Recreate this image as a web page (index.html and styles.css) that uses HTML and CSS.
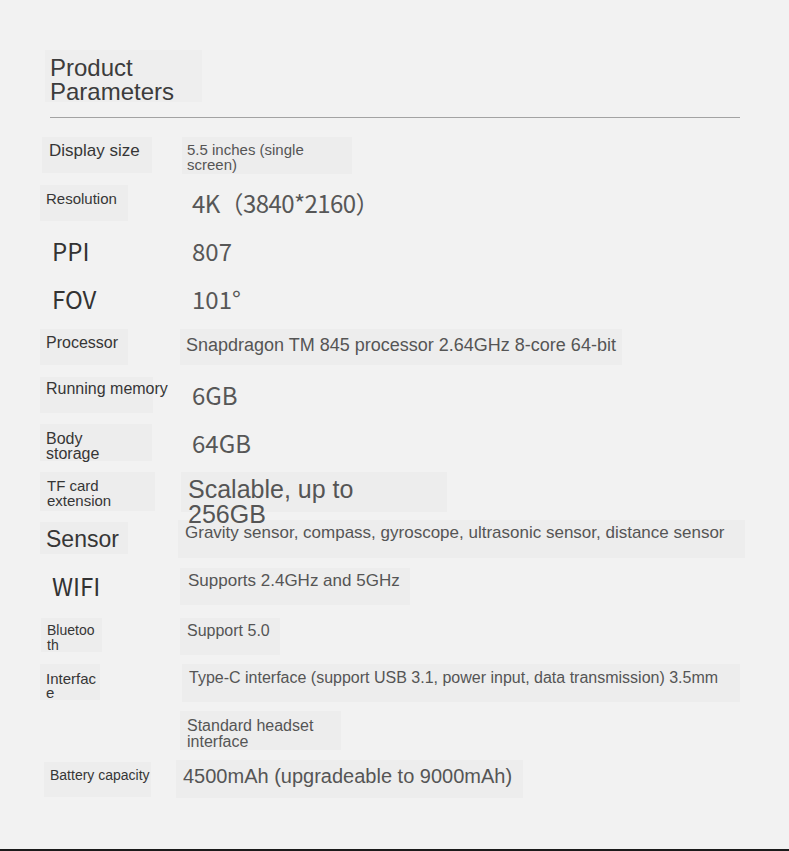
FILE: index.html
```html
<!DOCTYPE html>
<html lang="en">
<head>
<meta charset="utf-8">
<title>Product Parameters</title>
<link rel="stylesheet" href="styles.css">
</head>
<body>
<main class="sheet">
  <header class="title-box">
    <h1 class="title">Product<br>Parameters</h1>
  </header>
  <hr class="rule">
  <dl class="params">
    <div class="row">
      <dt class="k box k-display">Display size</dt>
      <dd class="v box v-display">5.5 inches (single screen)</dd>
    </div>
    <div class="row">
      <dt class="k box k-res">Resolution</dt>
      <dd class="v cjk v-big v-res">4K（3840*2160）</dd>
    </div>
    <div class="row">
      <dt class="k cjk k-big">PPI</dt>
      <dd class="v cjk v-big">807</dd>
    </div>
    <div class="row">
      <dt class="k cjk k-big">FOV</dt>
      <dd class="v cjk v-big">101°</dd>
    </div>
    <div class="row">
      <dt class="k box k-proc">Processor</dt>
      <dd class="v box v-proc">Snapdragon TM 845 processor 2.64GHz 8-core 64-bit</dd>
    </div>
    <div class="row">
      <dt class="k box k-mem">Running memory</dt>
      <dd class="v cjk v-big">6GB</dd>
    </div>
    <div class="row">
      <dt class="k box k-body">Body storage</dt>
      <dd class="v cjk v-big v-big-low">64GB</dd>
    </div>
    <div class="row">
      <dt class="k box k-tf">TF card extension</dt>
      <dd class="v box v-tf">Scalable, up to 256GB</dd>
    </div>
    <div class="row">
      <dt class="k box k-sensor">Sensor</dt>
      <dd class="v box v-sensor">Gravity sensor, compass, gyroscope, ultrasonic sensor, distance sensor</dd>
    </div>
    <div class="row">
      <dt class="k cjk k-big k-wifi">WIFI</dt>
      <dd class="v box v-wifi">Supports 2.4GHz and 5GHz</dd>
    </div>
    <div class="row">
      <dt class="k box k-bt">Bluetooth</dt>
      <dd class="v box v-bt">Support 5.0</dd>
    </div>
    <div class="row">
      <dt class="k box k-if">Interface</dt>
      <dd class="v box v-if">Type-C interface (support USB 3.1, power input, data transmission) 3.5mm</dd>
    </div>
    <div class="row">
      <dt class="k k-empty"></dt>
      <dd class="v box v-headset">Standard headset interface</dd>
    </div>
    <div class="row">
      <dt class="k box k-bat">Battery capacity</dt>
      <dd class="v box v-bat">4500mAh (upgradeable to 9000mAh)</dd>
    </div>
  </dl>
</main>
</body>
</html>
```

FILE: styles.css
```css
* {
  box-sizing: border-box;
}

html, body {
  margin: 0;
  padding: 0;
  background: #f2f2f2;
}

body {
  font-family: "Liberation Sans", Arial, sans-serif;
  color: #3a3a3a;
}

.sheet {
  height: 851px;
  border-bottom: 2px solid #1b1b1b;
  overflow: hidden;
  padding-top: 50px;
}

.title-box {
  margin-left: 45px;
  width: 157px;
  height: 52px;
  background: #eeeeee;
  padding: 6px 0 0 5px;
}

.title {
  margin: 0;
  font-weight: 400;
  font-size: 24px;
  line-height: 24px;
  color: #3c3c3c;
}

.rule {
  margin: 15px 0 0 50px;
  width: 690px;
  height: 0;
  border: 0;
  border-top: 1px solid #a3a3a3;
}

.params {
  margin: 19px 0 0;
  padding-left: 38px;
}

.row {
  display: grid;
  grid-template-columns: 138px 1fr;
  align-items: start;
  height: 48px;
}

.k,
.v {
  margin: 0;
  white-space: nowrap;
  justify-self: start;
}

.k {
  color: #363636;
}

.v {
  color: #555555;
}

.box {
  background: #ededed;
}

.cjk {
  font-family: "Noto Sans CJK SC", "Noto Sans", sans-serif;
  font-size: 24px;
  line-height: 24px;
}

/* big CJK-styled entries */
.k-big {
  margin-left: 14px;
  padding-top: 5.5px;
  color: #333333;
}

.k-wifi {
  padding-top: 4.5px;
}

.v-big {
  margin-left: 16px;
  padding-top: 5.5px;
  color: #575757;
}

.v-big-low {
  padding-top: 6px;
}

.v-res {
  letter-spacing: -0.6px;
}

/* Display size */
.k-display {
  margin-left: 4px;
  width: 110px;
  height: 36px;
  padding: 4px 0 0 7px;
  font-size: 17px;
  line-height: 20px;
}

.v-display {
  margin-left: 6px;
  width: 170px;
  height: 37px;
  padding: 6.25px 40px 0 5px;
  font-size: 15px;
  line-height: 14.5px;
  white-space: normal;
}

/* Resolution */
.k-res {
  margin-left: 2px;
  width: 88px;
  height: 36px;
  padding: 5px 0 0 6px;
  font-size: 15px;
  line-height: 18px;
}

/* Processor */
.k-proc {
  margin-left: 2px;
  width: 88px;
  height: 36px;
  padding: 4.5px 0 0 6px;
  font-size: 16px;
  line-height: 18px;
}

.v-proc {
  margin-left: 4px;
  width: 442px;
  height: 36px;
  padding: 5.75px 0 0 6px;
  font-size: 18px;
  line-height: 20px;
}

/* Running memory */
.k-mem {
  margin-left: 2px;
  width: 113px;
  height: 36px;
  padding: 2.5px 0 0 6px;
  font-size: 16px;
  line-height: 18px;
}

/* Body storage */
.k-body {
  margin-left: 2px;
  margin-top: -1px;
  width: 112px;
  height: 37px;
  padding: 8px 40px 0 6px;
  font-size: 16px;
  line-height: 14.5px;
  white-space: normal;
}

/* TF card */
.k-tf {
  margin-left: 2px;
  margin-top: -1px;
  width: 115px;
  height: 39px;
  padding: 7px 30px 0 7px;
  font-size: 15px;
  line-height: 14.5px;
  white-space: normal;
}

.v-tf {
  position: relative;
  z-index: 1;
  margin-left: 5px;
  margin-top: -1px;
  width: 266px;
  height: 40px;
  padding: 5px 60px 0 7px;
  font-size: 25px;
  line-height: 25px;
  white-space: normal;
}

/* Sensor */
.k-sensor {
  margin-left: 2px;
  margin-top: 1px;
  width: 88px;
  height: 32px;
  padding: 4px 0 0 6px;
  font-size: 23px;
  line-height: 26px;
}

.v-sensor {
  margin-left: 2px;
  margin-top: -1px;
  width: 567px;
  height: 38px;
  padding: 2.5px 0 0 7px;
  font-size: 17px;
  line-height: 20px;
}

/* WIFI */
.v-wifi {
  margin-left: 4px;
  margin-top: -1px;
  width: 230px;
  height: 37px;
  padding: 3px 0 0 8px;
  font-size: 17px;
  line-height: 20px;
}

/* Bluetooth */
.k-bt {
  margin-left: 3px;
  margin-top: 1px;
  width: 61px;
  height: 34px;
  padding: 4.5px 6px 0 6px;
  font-size: 14px;
  line-height: 15px;
  white-space: normal;
  word-break: break-all;
}

.v-bt {
  margin-left: 4px;
  margin-top: 1px;
  width: 100px;
  height: 37px;
  padding: 4px 0 0 7px;
  font-size: 16px;
  line-height: 18px;
}

/* Interface */
.k-if {
  margin-left: 2px;
  margin-top: -1px;
  width: 60px;
  height: 36px;
  padding: 7.5px 0 0 6px;
  font-size: 15px;
  line-height: 14.5px;
  white-space: normal;
  word-break: break-all;
}

.v-if {
  margin-left: 6px;
  margin-top: -1px;
  width: 558px;
  height: 38px;
  padding: 4.5px 0 0 7px;
  font-size: 16px;
  line-height: 18px;
}

.v-headset {
  margin-left: 4px;
  margin-top: -2px;
  width: 161px;
  height: 39px;
  padding: 6.5px 0 0 7px;
  font-size: 16px;
  line-height: 16px;
  white-space: normal;
}

/* Battery */
.k-bat {
  margin-left: 6px;
  margin-top: 1px;
  width: 107px;
  height: 35px;
  padding: 5px 0 0 6px;
  font-size: 14px;
  line-height: 16px;
}

.v-bat {
  margin-left: 0;
  margin-top: -1px;
  width: 347px;
  height: 38px;
  padding: 5px 0 0 7px;
  font-size: 20px;
  line-height: 22px;
}
```
